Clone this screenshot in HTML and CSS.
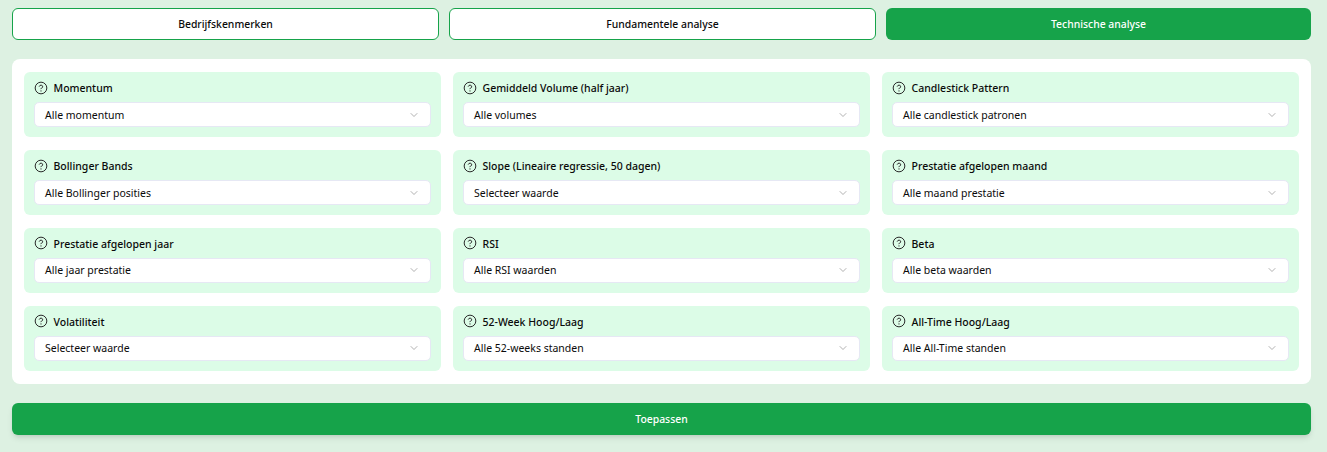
FILE: index.html
```html
<!DOCTYPE html>
<html lang="nl">
<head>
<meta charset="utf-8">
<title>Technische analyse</title>
<link rel="stylesheet" href="styles.css">
</head>
<body>
<svg class="sprite" width="0" height="0" aria-hidden="true">
  <symbol id="help" viewBox="0 0 24 24"><circle cx="12" cy="12" r="10" fill="none" stroke="currentColor" stroke-width="1.7"/><path d="M9.1 9a3 3 0 0 1 5.8 1c0 2-3 3-3 3" fill="none" stroke="currentColor" stroke-width="1.7" stroke-linecap="round" stroke-linejoin="round"/><path d="M12 17h.01" fill="none" stroke="currentColor" stroke-width="2" stroke-linecap="round"/></symbol>
  <symbol id="chev" viewBox="0 0 24 24"><path d="m6 9 6 6 6-6" fill="none" stroke="currentColor" stroke-width="1.7" stroke-linecap="round" stroke-linejoin="round"/></symbol>
</svg>
<main class="page">
  <nav class="tabs">
    <button class="tab">Bedrijfskenmerken</button>
    <button class="tab">Fundamentele analyse</button>
    <button class="tab tab-active">Technische analyse</button>
  </nav>
  <section class="panel">
    <div class="field"><div class="label"><svg class="help"><use href="#help"/></svg><span>Momentum</span></div><div class="select"><span>Alle momentum</span><svg class="chev"><use href="#chev"/></svg></div></div>
    <div class="field"><div class="label"><svg class="help"><use href="#help"/></svg><span>Gemiddeld Volume (half jaar)</span></div><div class="select"><span>Alle volumes</span><svg class="chev"><use href="#chev"/></svg></div></div>
    <div class="field"><div class="label"><svg class="help"><use href="#help"/></svg><span>Candlestick Pattern</span></div><div class="select"><span>Alle candlestick patronen</span><svg class="chev"><use href="#chev"/></svg></div></div>
    <div class="field"><div class="label"><svg class="help"><use href="#help"/></svg><span>Bollinger Bands</span></div><div class="select"><span>Alle Bollinger posities</span><svg class="chev"><use href="#chev"/></svg></div></div>
    <div class="field"><div class="label"><svg class="help"><use href="#help"/></svg><span>Slope (Lineaire regressie, 50 dagen)</span></div><div class="select"><span>Selecteer waarde</span><svg class="chev"><use href="#chev"/></svg></div></div>
    <div class="field"><div class="label"><svg class="help"><use href="#help"/></svg><span>Prestatie afgelopen maand</span></div><div class="select"><span>Alle maand prestatie</span><svg class="chev"><use href="#chev"/></svg></div></div>
    <div class="field"><div class="label"><svg class="help"><use href="#help"/></svg><span>Prestatie afgelopen jaar</span></div><div class="select"><span>Alle jaar prestatie</span><svg class="chev"><use href="#chev"/></svg></div></div>
    <div class="field"><div class="label"><svg class="help"><use href="#help"/></svg><span>RSI</span></div><div class="select"><span>Alle RSI waarden</span><svg class="chev"><use href="#chev"/></svg></div></div>
    <div class="field"><div class="label"><svg class="help"><use href="#help"/></svg><span>Beta</span></div><div class="select"><span>Alle beta waarden</span><svg class="chev"><use href="#chev"/></svg></div></div>
    <div class="field"><div class="label"><svg class="help"><use href="#help"/></svg><span>Volatiliteit</span></div><div class="select"><span>Selecteer waarde</span><svg class="chev"><use href="#chev"/></svg></div></div>
    <div class="field"><div class="label"><svg class="help"><use href="#help"/></svg><span>52-Week Hoog/Laag</span></div><div class="select"><span>Alle 52-weeks standen</span><svg class="chev"><use href="#chev"/></svg></div></div>
    <div class="field"><div class="label"><svg class="help"><use href="#help"/></svg><span>All-Time Hoog/Laag</span></div><div class="select"><span>Alle All-Time standen</span><svg class="chev"><use href="#chev"/></svg></div></div>
  </section>
  <button class="apply">Toepassen</button>
</main>
</body>
</html>
```
FILE: styles.css
```css
* { box-sizing: border-box; }
html, body { margin: 0; height: 100%; }
body {
  background: #ddf1e2;
  color: #0a0a0a;
  font-family: "Noto Sans", "Open Sans", sans-serif;
  font-size: 10.5px;
  overflow: hidden;
}
.sprite { position: absolute; }
.page { padding: 8px 16px 0 12px; display: flex; flex-direction: column; }
.tabs { display: flex; gap: 10px; }
.tab {
  flex: 1 1 0;
  height: 32px;
  padding: 0;
  background: #fff;
  border: 1px solid #16a34a;
  border-radius: 6px;
  color: #0a0a0a;
  font: 550 10.4px "Noto Sans", sans-serif;
}
.tab-active { background: #16a34a; border: 0; color: #fff; }
.panel {
  margin-top: 19px;
  padding: 13.3px 12px 13.1px;
  background: #fff;
  border-radius: 8px;
  display: grid;
  grid-template-columns: repeat(3, 1fr);
  column-gap: 12px;
  row-gap: 12.8px;
}
.field {
  height: 65px;
  padding: 7px 10px 0;
  background: #dcfce7;
  border-radius: 6px;
}
.label { display: flex; align-items: center; gap: 5.5px; height: 17px; line-height: 15px; font-weight: 500; font-size: 10.5px; }
.label span { margin-top: 2px; }
.help { width: 14px; height: 14px; color: #262626; }
.select {
  margin-top: 6px;
  height: 25px;
  padding: 0 10px;
  background: #fff;
  border: 1px solid #e6e8f4;
  border-radius: 5px;
  display: flex;
  align-items: center;
  justify-content: space-between;
  line-height: 20px;
}
.chev { width: 12px; height: 12px; color: #a3a3a3; }
.apply {
  margin-top: 19.2px;
  height: 32px;
  padding: 0;
  background: #16a34a;
  border: 0;
  border-radius: 6px;
  color: #fff;
  font: 550 10.4px "Noto Sans", sans-serif;
  box-shadow: 0 4px 6px -1px rgba(0,0,0,.1), 0 2px 4px -2px rgba(0,0,0,.1);
}
```
